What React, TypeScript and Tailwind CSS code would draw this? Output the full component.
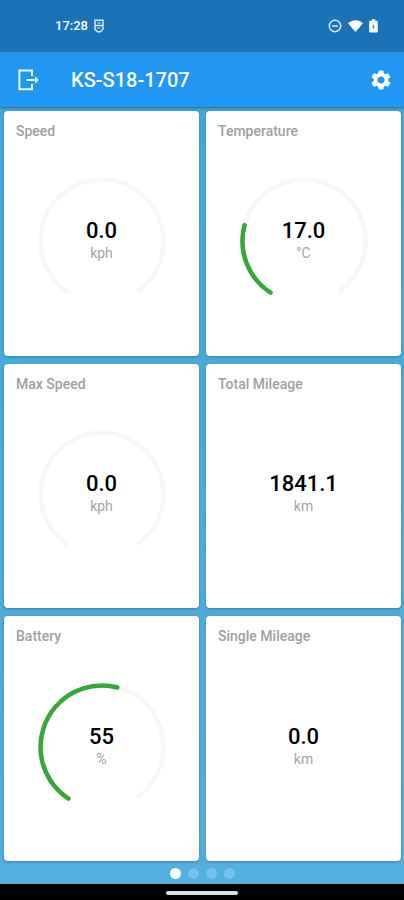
import { MdSettings } from "react-icons/md";

type Metric = {
  label: string;
  value: string;
  unit: string;
  gauge?: number;
};

const METRICS: Metric[] = [
  { label: "Speed", value: "0.0", unit: "kph", gauge: 0 },
  { label: "Temperature", value: "17.0", unit: "°C", gauge: 24.6 },
  { label: "Max Speed", value: "0.0", unit: "kph", gauge: 0 },
  { label: "Total Mileage", value: "1841.1", unit: "km" },
  { label: "Battery", value: "55", unit: "%", gauge: 55.2 },
  { label: "Single Mileage", value: "0.0", unit: "km" },
];

// The dial is open at the bottom, about 33 degrees to each side of the vertical.
const ARC = "M30.5 115.6 A61.5 61.5 0 1 1 99 114.6";

function Gauge({ percent }: { percent: number }) {
  return (
    <svg
      viewBox="0 0 128 128"
      fill="none"
      aria-hidden="true"
      className="col-start-1 row-start-1 size-32"
    >
      <path d={ARC} stroke="#f7f7f7" strokeWidth="4.5" />
      {percent > 0 && (
        <path
          d={ARC}
          stroke="#34a83a"
          strokeWidth="4.5"
          strokeLinecap="round"
          pathLength={100}
          strokeDasharray={`${percent} 200`}
        />
      )}
    </svg>
  );
}

function MetricCard({ label, value, unit, gauge }: Metric) {
  return (
    <section className="flex flex-col rounded bg-white p-3 shadow-sm shadow-black/20">
      <h2 className="text-sm leading-4 font-medium text-[#a0a0a0]">{label}</h2>
      <div className="grid min-h-32 flex-1 place-items-center">
        {gauge !== undefined && <Gauge percent={gauge} />}
        <p className="col-start-1 row-start-1 flex flex-col items-center">
          <span className="text-[22px] leading-6 font-medium text-black">{value}</span>
          <span className="text-sm leading-5 text-[#a3a3a3]">{unit}</span>
        </p>
      </div>
    </section>
  );
}

function StatusBar() {
  return (
    <div className="flex h-13 items-center justify-between bg-[#1c72b7] pr-6.5 pl-[55px] text-white">
      <div className="flex items-center gap-1.5">
        <span className="text-[13px] leading-4 font-medium">17:28</span>
        <svg viewBox="0 0 10 14" className="h-3.5 w-2.5" fill="none" stroke="#dcebf8" strokeWidth="1.4" aria-hidden="true">
          <path d="M1 1.2H9V10.2L6.5 12.8H3.5L1 10.2Z M1 6.5H9" />
          <path d="M3.5 4H6.5M3.5 9H6.5" strokeWidth="1" />
        </svg>
      </div>
      <div className="flex items-center gap-1.5">
        <svg viewBox="0 0 14 14" className="size-3.5" fill="none" stroke="#dcebf8" strokeWidth="1.5" aria-hidden="true">
          <circle cx="7" cy="7" r="5.7" />
          <path d="M4 7H10" />
        </svg>
        <svg viewBox="0 0 15 12" className="h-3 w-[15px]" fill="#fff" aria-hidden="true">
          <path d="M7.5 12 0 3.2C4.3 -0.7 10.7 -0.7 15 3.2Z" />
        </svg>
        <svg viewBox="0 0 9 14" className="h-3.5 w-[9px]" aria-hidden="true">
          <path fill="#fff" d="M2.8 0.3H6.2V1.8H7.8Q8.8 1.8 8.8 2.8V12.5Q8.8 13.5 7.8 13.5H1.2Q0.2 13.5 0.2 12.5V2.8Q0.2 1.8 1.2 1.8H2.8Z" />
          <path fill="#5b93c6" d="M5 4.5 2.8 8.2H4.1V10.8L6.2 7.2H5Z" />
        </svg>
      </div>
    </div>
  );
}

export default function App() {
  return (
    <div className="flex min-h-screen flex-col bg-black font-[Roboto,'Liberation_Sans',sans-serif]">
      <StatusBar />
      <header className="z-10 flex h-[55px] items-center bg-[#2196f3] pr-[11px] pl-4 text-white shadow-sm shadow-black/30">
        <button type="button" aria-label="Disconnect" className="flex size-6 items-center justify-center">
          <svg viewBox="0 0 24 24" className="size-6" fill="none" stroke="#f0f8ff" strokeWidth="2" aria-hidden="true">
            <path d="M16 8V2.6H3.4V21.2H16V16" />
            <path d="M10.5 12H20" />
            <path d="M19 8.6 23 12 19 15.4Z" fill="#f0f8ff" stroke="none" />
          </svg>
        </button>
        <h1 className="ml-[31px] flex-1 text-xl font-medium">KS-S18-1707</h1>
        <button type="button" aria-label="Settings">
          <MdSettings className="size-6" />
        </button>
      </header>
      <main className="flex flex-1 flex-col bg-linear-to-b from-[#45a8d8] to-[#54aede]">
        <div className="grid flex-1 auto-rows-fr grid-cols-2 gap-x-[7px] gap-y-2 pt-1 pr-[3px] pl-1">
          {METRICS.map((metric) => (
            <MetricCard key={metric.label} {...metric} />
          ))}
        </div>
        <nav aria-label="Pages" className="flex h-[23px] items-center justify-center gap-[7px] pt-0.5">
          <button type="button" aria-label="Page 1" className="size-[11px] rounded-full bg-white" />
          <button type="button" aria-label="Page 2" className="size-[11px] rounded-full bg-[#76c0ed]" />
          <button type="button" aria-label="Page 3" className="size-[11px] rounded-full bg-[#76c0ed]" />
          <button type="button" aria-label="Page 4" className="size-[11px] rounded-full bg-[#76c0ed]" />
        </nav>
      </main>
      <footer className="flex h-4 items-center justify-center bg-black pt-0.5">
        <div className="h-1 w-18 rounded-full bg-[#dedede]" />
      </footer>
    </div>
  );
}
